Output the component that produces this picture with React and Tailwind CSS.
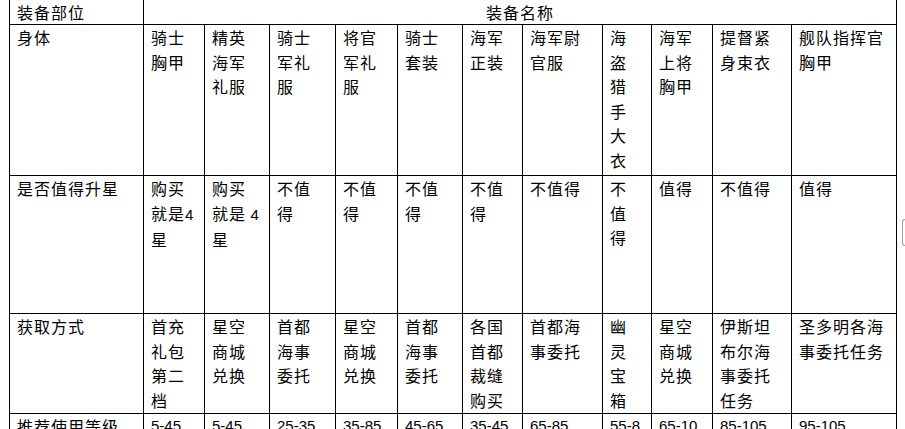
const cols = ['骑士胸甲', '精英海军礼服', '骑士军礼服', '将官军礼服', '骑士套装', '海军正装', '海军尉官服', '海盗猎手大衣', '海军上将胸甲', '提督紧身束衣', '舰队指挥官胸甲']

const shengxing = [
  <>购买就是<span className="font-['Liberation_Sans',sans-serif] text-[15px] tracking-normal">4</span>星</>,
  <>购买就是 <span className="font-['Liberation_Sans',sans-serif] text-[15px] tracking-normal">4</span>星</>,
  '不值得',
  '不值得',
  '不值得',
  '不值得',
  '不值得',
  '不值得',
  '值得',
  '不值得',
  '值得',
]

const huoqu = ['首充礼包第二档', '星空商城兑换', '首都海事委托', '星空商城兑换', '首都海事委托', '各国首都裁缝购买', '首都海事委托', '幽灵宝箱', '星空商城兑换', '伊斯坦布尔海事委托任务', '圣多明各海事委托任务']

const dengji = ['5-45', '5-45', '25-35', '35-85', '45-65', '35-45', '65-85', '55-85', '65-105', '85-105', '95-105']

const cell = 'bg-white pl-[7px] pr-[8px] pt-0'

function Row({ label, items, num }) {
  return (
    <>
      <div className={cell}>{label}</div>
      {items.map((it, i) => (
        <div
          key={i}
          className={`${cell} ${num ? "break-all font-['Liberation_Sans',sans-serif] text-[15px] tracking-normal" : ''}`}
        >
          {it}
        </div>
      ))}
    </>
  )
}

export default function App() {
  return (
    <div className="relative min-h-screen overflow-hidden bg-white pl-[9px] font-['Noto_Sans_CJK_SC',sans-serif] text-[16px] leading-[24.6px] tracking-[1px] text-black">
      <div className="-mt-px grid w-[888px] grid-cols-[133px_60px_64px_65px_61px_64px_59px_79px_48px_60px_78px_104px] grid-rows-[24px_150px_137px_99px_auto] gap-px bg-black p-px">
        <div className={cell}>装备部位</div>
        <div className="col-span-11 bg-white text-center">装备名称</div>
        <Row label="身体" items={cols} />
        <Row label="是否值得升星" items={shengxing} />
        <Row label="获取方式" items={huoqu} />
        <Row label="推荐使用等级" items={dengji} num />
      </div>
      <div className="absolute left-[902px] top-[219px] h-[27px] w-[4px] rounded-l-[3px] border-y border-l border-gray-400" />
    </div>
  )
}
